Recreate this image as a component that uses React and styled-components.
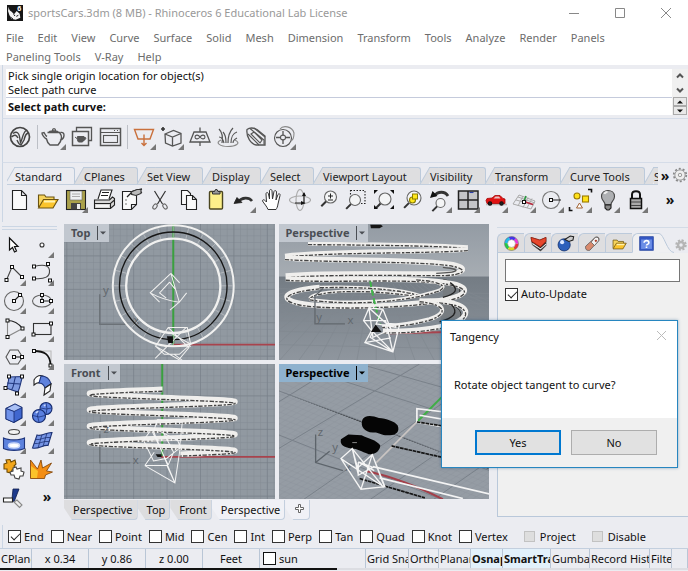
import { useState } from "react";
import styled, { createGlobalStyle, css } from "styled-components";

const GlobalStyle = createGlobalStyle`
  * {
    box-sizing: border-box;
  }
  body {
    margin: 0;
    background: #ebecf1;
  }
  body, button, input {
    font-family: "Noto Sans", "Open Sans", sans-serif;
    font-size: 11px;
    line-height: 16px;
    color: #111;
  }
  button {
    padding: 0;
    border: 0;
    background: none;
  }
`;

/* ---------- icons, all on a 28 x 28 canvas ---------- */

const Svg = ({ children, size = 28 }) => (
  <svg width={size} height={size} viewBox="0 0 28 28" fill="none" stroke="#555" strokeWidth="1.1" aria-hidden="true">
    {children}
  </svg>
);

const Handle = ({ x, y }) => (
  <rect x={x - 1.5} y={y - 1.5} width="3" height="3" fill="#fff" stroke="#111" strokeWidth="1" />
);

const Lens = ({ cx = 17, cy = 11, r = 6 }) => (
  <>
    <path d={`M${cx - r * 0.7} ${cy + r * 0.7}L${cx - r * 0.7 - 5} ${cy + r * 0.7 + 5}`} stroke="#333" strokeWidth="2" />
    <circle cx={cx} cy={cy} r={r} fill="#f4f5f6" stroke="#666" strokeWidth="1.1" />
  </>
);

const icons = {
  vray: (
    <>
      <circle cx="14" cy="14" r="9.5" stroke="#444" strokeWidth="1.7" />
      <path d="M7 10.5c4-3 6 0 6.5 3l1 6c2-3 2-9 5.500-12M5.500 14c3-3 5-2 6.500 1M22 10c-3 1-3 4-4 7l-3 5c-2 0-3-3-4-5" stroke="#444" strokeWidth="1.4" />
    </>
  ),
  teapot: (
    <path
      d="M7.5 9.500h12c3 3.5 2.5 8-1.500 12.500h-8c-2.500-2-3-3.500-3.500-6-2-1-4.500-4-4.500-6l2-.5c1 2 2 3.500 3 4M9 9.500c0-2 9-2 9.500 0M12.500 7.500c0-2.500 3-2.500 3 0M20.500 9.500c5-1 4.500 6-.5 8"
      strokeWidth="1.4"
    />
  ),
  frames: (
    <>
      <path d="M8.500 8V4.500h15v13h-3" strokeWidth="1.3" />
      <rect x="4.500" y="8.500" width="16" height="14" strokeWidth="1.5" />
      <path d="M9.500 13.500h6.500c.5 2-.5 4.500-1.500 5.500h-4c-1-1-1.500-3.500-1-5.500zM7 14l2.500 2M16 14.500c3-1 2 3-1 3" fill="#555" strokeWidth="1" />
    </>
  ),
  frameBuffer: (
    <>
      <rect x="4.500" y="5.500" width="20" height="17" strokeWidth="1.5" />
      <path d="M4.500 9.500h20M18 7.500h1M21 7.500h1" strokeWidth="1.2" />
      <rect x="7.500" y="12.500" width="14" height="7" strokeWidth="1.1" />
    </>
  ),
  areaLight: <path d="M4.500 6.500h19l-3.500 9.500H8zM14 11.500v11M11.500 20l2.500 2.500 2.500-2.500" stroke="#c9703c" strokeWidth="1.4" />,
  proxy: (
    <>
      <path d="M3 6h4M5 4v4" stroke="#333" strokeWidth="1.6" />
      <path d="M7 11l8.500-3.500 7.500 3v9.500L14.500 23 7.500 20zM7 11l7.500 3 8.500-3.500M14.500 14v9" strokeWidth="1.3" />
    </>
  ),
  infinite: (
    <>
      <path d="M8 9h12l4 10H4zM14 4.500V9M14 19v4" strokeWidth="1.3" />
      <path d="M14 14c-2-3-5-2-5 0s3 3 5 0 5-2 5 0-3 3-5 0z" strokeWidth="1.1" />
    </>
  ),
  fur: (
    <>
      <path d="M8 20C9 14 8 9 5 6M12 20c0-6-1-9-3-11M14 20c0-7 1-11 5-15M17 20c0-5 2-10 6-11M10 20c-1-4-3-6-5-6M19 20c0-3 2-4 4-5" strokeWidth="1.2" />
      <path d="M7 17c-7 3 0 6.500 7 6.500s14-3 7-6.500" stroke="#888" strokeWidth="1.2" />
    </>
  ),
  clipper: (
    <>
      <path d="M5 6.500c4-3 8-1 10 0l8 6.500v9L14 22c-5-1-10-8-9-15.500z" strokeWidth="1.3" />
      <path d="M8 5.500l14 11.500v4.500M9 11l3-2 8 8-2 3zM6 11l11 11M12 5l11 9" strokeWidth="1.1" />
    </>
  ),
  sun: (
    <>
      <circle cx="13" cy="15" r="8.500" strokeWidth="1.1" />
      <path d="M10 6c3-4 12-3 14 4 0 5-1 7-3 8" stroke="#888" />
      <circle cx="13" cy="14.500" r="2.500" />
      <path d="M13 8v5M13 16v5M6 14.500h5M15 14.500h5" strokeWidth="1.3" />
    </>
  ),
  newFile: <path d="M6.500 4.500h9l5 5v14h-14zM15.500 4.500v5h5" fill="#fafafa" stroke="#222" />,
  open: (
    <>
      <path d="M4.500 21V9h6l1.500 2h8v3" fill="#f7d45c" stroke="#6b5310" />
      <path d="M4.500 22l5-8.500h14.500l-5 8.500z" fill="#fbc42c" stroke="#6b5310" />
      <path d="M10 15.500h11" stroke="#fff3b0" strokeWidth="2" />
    </>
  ),
  save: (
    <>
      <rect x="4.500" y="4.500" width="19" height="19" fill="#aaa14b" stroke="#222" />
      <rect x="8" y="5" width="12" height="9" fill="#eef0f2" stroke="#666" strokeWidth=".6" />
      <path d="M10 8h8M10 10.500h8" stroke="#999" strokeWidth=".8" />
      <rect x="9" y="17" width="10" height="6.500" fill="#444" stroke="none" />
      <rect x="15" y="18" width="3" height="5" fill="#eee" stroke="none" />
    </>
  ),
  print: (
    <>
      <path d="M8 13l3-9h11l-3 9" fill="#fff" stroke="#222" />
      <path d="M4.500 14h15l3-3 2 1.500V19l-4 3.500h-16z" fill="#d8d8d8" stroke="#222" />
      <path d="M4.500 17.500h16l4-3.500M20.500 17v5M12 6.500h7M11 9.500h7" stroke="#222" />
      <path d="M6 20h13" stroke="#fff" strokeWidth="1.5" />
    </>
  ),
  props: (
    <>
      <path d="M4.500 5.500h14v13l-5 5h-9zM18.500 18.500h-5v5" fill="#fafafa" stroke="#222" />
      <path d="M9 11l6-6 9-2M13 8h7l4-2" stroke="#222" strokeWidth="1.3" />
      <path d="M13 6l6-2.500 4 0 0 4-5 2-4-1z" fill="#bbb" stroke="#333" />
      <path d="M7 14h2M7 18h2" stroke="#777" />
    </>
  ),
  cut: (
    <>
      <path d="M8.500 5l8 13M19.500 5l-8 13" stroke="#333" strokeWidth="1.2" />
      <ellipse cx="9" cy="20.500" rx="1.800" ry="2.800" transform="rotate(35 9 20.5)" stroke="#666" />
      <ellipse cx="19" cy="20.500" rx="1.800" ry="2.800" transform="rotate(-35 19 20.5)" stroke="#666" />
    </>
  ),
  copy: (
    <>
      <path d="M7.500 4.500h6l3 3v11h-9z" fill="#fafafa" stroke="#222" />
      <path d="M12.500 9.500h6l4 4v10h-10zM18.500 9.500v4h4" fill="#fafafa" stroke="#222" />
    </>
  ),
  paste: (
    <>
      <rect x="7.500" y="5.500" width="13" height="17.500" rx="1" fill="#fdf08a" stroke="#4b4620" strokeWidth="1.400" />
      <path d="M10.500 8V5.500h2l1-2h1.500l1 2h2V8z" fill="#999" stroke="#333" strokeWidth="1" />
    </>
  ),
  undo: (
    <>
      <path d="M8 16c4-5 11-5 14-1" stroke="#333" strokeWidth="2.6" />
      <path d="M4 17.500l3-6 5 5z" fill="#222" stroke="#222" strokeWidth=".8" />
    </>
  ),
  pan: (
    <path
      d="M10 23.500c-1-3-4-6-5.500-8.500 0-2 2-1.500 4 1L8 8c0-2 2-2 2.500 0l1 5 0-8c0-2 2.500-2 2.500 0l.5 8 1.500-7.500c.5-1.500 2.500-1 2.500.5l-.5 8 2-5.500c1-1.500 2.500-.5 2 1L20 18c-.5 3-1 4-2 5.500z"
      fill="#fff"
      stroke="#333"
      strokeWidth="1"
    />
  ),
  rotate: (
    <>
      <ellipse cx="14" cy="14" rx="10.500" ry="4" stroke="#aaa" />
      <ellipse cx="14" cy="14" rx="4" ry="10.500" stroke="#aaa" />
      <path d="M9 17h10M18 7v9" stroke="#222" />
      <path d="M15 15l4.500 2-4.500 2zM16 10l2-4 2 4z" fill="#111" stroke="none" />
    </>
  ),
  zoom: (
    <>
      <Lens cx={16.5} />
      <path d="M14 10h5M16.500 7.500v5M14 14h5" stroke="#222" strokeWidth="1" />
    </>
  ),
  zoomWindow: (
    <>
      <rect x="8.500" y="4.500" width="14.500" height="13" stroke="#222" strokeDasharray="1.5 1.5" />
      <Lens cx={13} cy={14} r={5.5} />
    </>
  ),
  zoomExtents: (
    <>
      <Lens cx={15} cy={13} />
      <path d="M4 8V4h4zM20 4h4v4zM24 19v4h-4zM4 19v4h4z" fill="#111" stroke="none" />
    </>
  ),
  zoomSelected: (
    <>
      <Lens cx={16} cy={12} r={7} />
      <circle cx="14.500" cy="14" r="3" fill="#ffe81a" stroke="#8b7d00" />
      <rect x="14.500" y="8" width="5" height="5" fill="#ffe81a" stroke="#8b7d00" strokeWidth="1" />
    </>
  ),
  undoView: (
    <>
      <path d="M8 10c4-5 11-5 14 0" stroke="#333" strokeWidth="2.800" />
      <path d="M4 12l2.500-7 5 5z" fill="#111" stroke="none" />
      <Lens cx={14.5} cy={17} r={4.5} />
    </>
  ),
  fourView: (
    <>
      <rect x="4.500" y="5" width="19.500" height="18" fill="#c4c5c8" stroke="#222" strokeWidth="1.500" />
      <path d="M14 5v18M4.500 14H24" stroke="#222" strokeWidth="1.500" />
      <path d="M15.500 6.500h4" stroke="#2b3fa8" />
    </>
  ),
  car: (
    <>
      <path d="M4 18.500h21" stroke="#bbb" strokeWidth="1.500" />
      <path d="M4 14.500l1-2 5-.5 3-2.500h5l3 3 2 .5v4.500H5z" fill="#e01212" stroke="#a50808" strokeWidth=".8" />
      <path d="M13.500 10.500h3.500l1.500 2H11.500z" fill="#e8c4c4" stroke="none" />
      <circle cx="8" cy="17.500" r="1.700" fill="#222" stroke="#111" />
      <circle cx="19.500" cy="17.500" r="1.700" fill="#222" stroke="#111" />
    </>
  ),
  cplane: (
    <>
      <path d="M3 18l18 5 4-8-16-6zM6 14l18 5M8 11l17 6M8 20l5-10M13 21.500l5-10M17 22l5-9.500" stroke="#aaa" strokeWidth="1" />
      <path d="M14 15.500l9 3" stroke="#b8273b" strokeWidth="1.600" />
      <path d="M14 15l2-5" stroke="#25963b" strokeWidth="1.600" />
      <Handle x={14} y={16} />
    </>
  ),
  circleObj: (
    <>
      <circle cx="13" cy="14" r="8.500" stroke="#777" />
      <path d="M13 14h10" stroke="#333" />
      <Handle x={13} y={14} />
    </>
  ),
  selectObj: (
    <>
      <circle cx="11" cy="10" r="3" fill="#ffe21a" stroke="#9b7a00" />
      <rect x="16.500" y="10" width="6" height="6" fill="#ffe21a" stroke="#9b7a00" />
      <path d="M13.500 17l3 5h-6z" fill="#fff" stroke="#a06030" strokeWidth="1" />
      <path d="M22 3.500h3.500v3M3.500 21v3.500h3" stroke="#111" strokeWidth="1.600" />
    </>
  ),
  bulb: (
    <>
      <path d="M11 18.500c0-3-3.500-4-3.500-8 0-8 13-8 13 0 0 4-3.500 5-3.500 8z" fill="#aeb0b3" stroke="#444" />
      <path d="M10.500 8c.5-1.500 1.500-2 3-2" stroke="#eee" strokeWidth="2" />
      <path d="M11 19h6v3l-2 2h-2l-2-2z" fill="#888" stroke="#222" />
    </>
  ),
  lock: (
    <>
      <path d="M10 12V8.500c0-4.500 8-4.500 8 0V12" stroke="#111" strokeWidth="2" />
      <rect x="8.500" y="12.500" width="11" height="10" fill="#aaa" stroke="#111" strokeWidth="1.500" />
      <path d="M9 16h10M9 19.500h10" stroke="#444" strokeWidth="1.200" />
    </>
  ),
  pointer: <path d="M9.500 7v12l3-2.500 2 4.500 2-1-2-4.500h3.500z" fill="#fff" stroke="#111" strokeWidth="1.200" />,
  point: <circle cx="14" cy="14" r="2" stroke="#333" fill="#fff" />,
  polyline: (
    <>
      <path d="M6.500 21L12 8l10 10" stroke="#444" />
      <Handle x={6.5} y={21} />
      <Handle x={12} y={8} />
      <Handle x={22} y={18} />
    </>
  ),
  ctrlCurve: (
    <>
      <path d="M6 7.500c8-2 15-2 15.500 4s-4 9-15.500 8" stroke="#444" />
      <Handle x={6} y={7.5} />
      <Handle x={20} y={5} />
      <Handle x={6} y={19.5} />
      <Handle x={22} y={21.5} />
    </>
  ),
  circle: (
    <>
      <circle cx="14" cy="14" r="9.500" stroke="#666" />
      <path d="M14 14l6-6" stroke="#222" />
      <Handle x={14} y={14} />
      <Handle x={20} y={8} />
    </>
  ),
  ellipse: (
    <>
      <ellipse cx="14" cy="14" rx="9.500" ry="6" stroke="#666" />
      <path d="M14 8v6h9" stroke="#222" />
      <Handle x={14} y={8} />
      <Handle x={14} y={14} />
      <Handle x={23} y={14} />
    </>
  ),
  arc: (
    <>
      <path d="M7.500 5.500c7 0 12 4 15 8" stroke="#222" />
      <path d="M7.500 5.500v16l15-8" stroke="#888" />
      <Handle x={7.5} y={5.5} />
      <Handle x={7.5} y={22} />
      <Handle x={22.5} y={13.5} />
    </>
  ),
  rect: (
    <>
      <rect x="5.500" y="8.500" width="17.500" height="11" stroke="#333" />
      <Handle x={23} y={8.5} />
      <Handle x={5.5} y={19.5} />
    </>
  ),
  polygon: (
    <>
      <path d="M10 7h8l4.500 7-4.500 7h-8l-4-7z" stroke="#555" />
      <path d="M14 14h8" stroke="#222" />
      <Handle x={14} y={14} />
      <Handle x={22} y={14} />
    </>
  ),
  fillet: (
    <>
      <path d="M8 8h15v14" stroke="#bbb" />
      <path d="M6 8c10 0 16 3 16.500 14" stroke="#111" strokeWidth="1.800" />
      <Handle x={6} y={8} />
      <Handle x={22.5} y={22.5} />
    </>
  ),
  surface: (
    <>
      <path d="M9 6l13.500-.5c-2 6-2 10-4.500 15.500L6 17c3-4 2-7 3-11z" fill="#7f9be0" stroke="#20367c" />
      <path d="M7 12l13 1M15.500 6c-2 5-1 9-4 13" stroke="#20367c" />
      <Handle x={9} y={5.5} />
      <Handle x={22} y={5.5} />
      <Handle x={5.5} y={17} />
      <Handle x={17} y={22.5} />
    </>
  ),
  sweep: (
    <>
      <path d="M6 9c3-5 6-5 9-4l-2 7c-3-1-5 0-7 2z" fill="#fff" stroke="#222" />
      <path d="M13 5c6 0 9 4 10 8l-6 4c-1-3-3-5-6-5z" fill="#5f82dd" stroke="#20367c" />
      <path d="M17 17l6-4-1 7-6 4z" fill="#fff" stroke="#222" />
    </>
  ),
  box: (
    <>
      <path d="M6 9.500L15 5l7 3.500v10.500l-8 4.500-8-3.500z" fill="#4067cf" stroke="#142a6e" />
      <path d="M6 9.500L15 5l7 3.500-8 4z" fill="#a9c0f5" stroke="#142a6e" strokeWidth=".8" />
      <path d="M6 9.500l8 3v11l-8-3.500z" fill="#6f92ea" stroke="#142a6e" strokeWidth=".8" />
    </>
  ),
  spheres: (
    <>
      <circle cx="18" cy="9.500" r="6" fill="#5f84e2" stroke="#142a6e" />
      <circle cx="11" cy="17" r="6.500" fill="#5a80e0" stroke="#142a6e" />
      <path d="M5 16.500q6 3 12 0M11 11q-3 6 0 12M12.500 9q6 2 11 0M18 4q2 6 0 11" stroke="#142a6e" strokeWidth=".7" />
      <path d="M8 14q1-1.500 2.500-1.500M16 7q1-1 1.500-1" stroke="#cddafa" strokeWidth="1.600" />
    </>
  ),
  solidTools: (
    <>
      <ellipse cx="14" cy="5" rx="5.500" ry="2.500" fill="#f4f4f4" stroke="#444" />
      <path d="M3.500 11c5 2.500 16 2.500 21 0v10.500c-5 2.500-16 2.500-21 0z" fill="#5d82dd" stroke="#20367c" />
      <ellipse cx="14" cy="18.500" rx="5.500" ry="2.500" fill="#fff" stroke="#cddafa" strokeWidth="1.500" />
    </>
  ),
  mesh: (
    <>
      <path d="M9 8c5 2 9-3 15-2.500l-4 13c-5-1-9 4-15.500 2.500z" fill="#7594e4" stroke="#1d3275" />
      <path d="M14 7.500L10 21M19 6l-4 13.500M7.500 12.500c5 1 9-3 15-2M6 16.500c5 1 9-3 15-2" stroke="#1d3275" strokeWidth=".8" />
    </>
  ),
  puzzle: (
    <>
      <path d="M4 9l3-1-1-3 4-.5 1 2.500 4-2 1 4-2 2 2 3-4 1-1 3-4-1 0-3-3 0z" fill="#f2a71b" stroke="#6f4b04" />
      <path d="M13 13l3-1 1 2 4-1 0 3 3 1-1 4-3 0-1 3-4-1-1-3-3 0-1-3 3-1z" fill="#fff" stroke="#444" />
    </>
  ),
  explode: (
    <>
      <path d="M2.500 5l7 9 3.500-9 1.500 8 9-5-5 8 6 1-7 3-1 3.500H2.500z" fill="#f38d13" stroke="#7c3e00" strokeWidth=".8" />
      <path d="M3 23V11l7 5-1 7z" fill="#fbc32b" stroke="none" />
    </>
  ),
  trim: (
    <>
      <path d="M13 6h6l-5 13-2-3z" fill="#1d3a8c" stroke="#0d1c4d" strokeWidth=".8" />
      <path d="M3.500 15h9v4h-9z" fill="#fff" stroke="#222" />
      <path d="M14 19l3-2 5 5-2.500 2.500z" fill="#eee" stroke="#888" />
    </>
  ),
  help: (
    <>
      <rect x="4" y="4" width="20" height="20" fill="#3558c4" stroke="#24439f" />
      <path d="M6 8h16v14H6z" fill="#6c8ee6" stroke="none" />
      <path d="M10.500 13c0-4.500 7-4 7 0 0 2.500-3.500 2-3.500 4M14 18.500v2" stroke="#fff" strokeWidth="2.400" />
    </>
  ),
  layers: (
    <>
      <path d="M3 5l13 4 9-4v12l-8 8L5 16z" fill="#222" stroke="#444" />
      <path d="M3 5l13 4 9-4v6l-8 8L4 11z" fill="#e6482d" stroke="#a3200d" />
      <path d="M5 14l12 8 8-7" stroke="#eee" strokeWidth="1.500" />
    </>
  ),
  render: (
    <>
      <circle cx="12" cy="16" r="9" fill="#2b5fbb" stroke="#0d2b66" />
      <circle cx="9" cy="12" r="3" fill="#dbe8ff" stroke="none" />
      <path d="M13 8l8-5 5 1-1 5-6 2z" fill="#ccc" stroke="#222" strokeWidth="1.600" />
    </>
  ),
  material: (
    <>
      <path d="M4 18L18 5c4-2 7 1 5 5L10 24c-5 1-7-2-6-6z" fill="#d98a6d" stroke="#555" />
      <path d="M12 12l5 5 6-7c1-4-1-6-5-5z" fill="#f4f4f4" stroke="#555" />
      <path d="M18 9l2 2" stroke="#a5341e" strokeWidth="3" />
    </>
  ),
  gear: (
    <>
      <circle cx="14" cy="14" r="11" stroke="#888" strokeWidth="3" strokeDasharray="3.5 3.410" />
      <circle cx="14" cy="14" r="9" fill="#eee" stroke="#888" strokeWidth="1.400" />
      <circle cx="14" cy="14" r="3" stroke="#888" strokeWidth="1.400" />
    </>
  ),
  gearFlat: (
    <>
      <circle cx="14" cy="14" r="9" stroke="#b5b5b5" strokeWidth="5" strokeDasharray="4 3.070" />
      <circle cx="14" cy="14" r="6" stroke="#b5b5b5" strokeWidth="5" />
    </>
  ),
  colors: (
    <>
      {["#e33", "#e3d", "#43e", "#2be", "#2c4", "#dd2"].map((c, i) => (
        <circle key={c} cx="14" cy="14" r="8" stroke={c} strokeWidth="4.500" strokeDasharray="8.4 41.860" strokeDashoffset={i * 8.377} />
      ))}
      <circle cx="14" cy="14" r="10.300" stroke="#666" strokeWidth=".8" />
      <circle cx="14" cy="14" r="5.700" fill="#fff" stroke="#777" strokeWidth=".6" />
    </>
  ),
};

/* ---------- title, menu, command line ---------- */

const Window = styled.div`
  display: flex;
  flex-direction: column;
  min-width: 0;
  background: #ebecf1;
`;

const TitleBar = styled.header`
  display: flex;
  align-items: center;
  height: 28px;
  padding: 0 12px 3px 7px;
  gap: 5px;
  background: #fff;
  white-space: nowrap;
  h1 {
    margin: 0;
    flex: 1;
    font-size: 11px;
    font-weight: 400;
    color: #999;
  }
`;

const WindowButtons = styled.div`
  display: flex;
  gap: 26px;
  button {
    display: flex;
    width: 20px;
    height: 20px;
    align-items: center;
    justify-content: center;
  }
`;

const MenuBar = styled.nav`
  display: flex;
  flex-wrap: wrap;
  gap: 3px 14px;
  padding: 2px 6px 0;
  background: #fff;
  button {
    color: #6c6c6c;
  }
`;

const CommandArea = styled.section`
  display: flex;
  margin-left: 2px;
  padding: 4px 0 3px 3px;
  border-left: 1px solid #cbd6e4;
  border-bottom: 1px solid #d5dce8;
`;

const CommandText = styled.div`
  flex: 1;
  min-width: 0;
  background: #fff;
  p {
    margin: 0;
    padding-left: 2px;
    line-height: 14px;
  }
  div {
    display: flex;
    align-items: center;
    border-top: 1px solid #c5cbdc;
    padding-left: 2px;
    height: 18px;
  }
  label {
    font-weight: 700;
    white-space: nowrap;
  }
  input {
    flex: 1;
    min-width: 0;
    height: 16px;
    border: 0;
    outline: 0;
    background: none;
  }
`;

const CommandScroll = styled.div`
  width: 16px;
  display: grid;
  grid-template-rows: 14px 14px 9px 9px;
  background: #f0f0f0;
  button {
    display: flex;
    align-items: center;
    justify-content: center;
  }
  button:nth-child(n + 3) {
    margin: 0 1px;
    border: 1px solid #aaa;
    background: #e9e9e9;
  }
`;

/* ---------- toolbars ---------- */

const ToolButton = styled.button`
  position: relative;
  display: flex;
  width: 28px;
  height: 28px;
  flex: none;
  ${(p) =>
    p.$flyout &&
    css`
      &::after {
        content: "";
        position: absolute;
        right: 2px;
        bottom: 1px;
        border: 3px solid transparent;
        border-right-color: #777;
        border-bottom-color: #777;
      }
    `}
`;

const ToolRow = styled.div`
  display: flex;
  align-items: center;
  margin-left: 2px;
  padding-left: 3px;
  border-left: 1px solid #cbd6e4;
  overflow: hidden;
`;

const VrayRow = styled(ToolRow)`
  height: 43px;
  padding-bottom: 7px;
`;

const Divider = styled.span`
  width: 6px;
  height: 24px;
  border-left: 1px solid #bcbfc6;
  margin-left: 3px;
  margin-right: -3px;
`;

const StandardRow = styled(ToolRow)`
  height: 37px;
  padding-bottom: 7px;
`;

const More = styled.button`
  margin-left: ${(p) => p.$gap || 0}px;
  width: ${(p) => p.$w || 18}px;
  flex: none;
  font-size: 14px;
  font-weight: 700;
  line-height: 14px;
`;

const TabStrip = styled.div`
  display: flex;
  height: 23px;
  padding: 4px 0 0 12px;
  margin-left: 2px;
  border-top: 1px solid #d5dce8;
  border-left: 1px solid #cbd6e4;
`;

const ToolTabs = styled.div`
  display: flex;
  flex: 1;
  min-width: 0;
  overflow: hidden;
  margin-left: -8px;
  padding-left: 8px;
  border-bottom: 1px solid #c3cfde;
`;

const ToolTab = styled.button`
  position: relative;
  flex: none;
  height: 18px;
  margin-right: 9px;
  padding: 0;
  border-top: 1px solid #bccadb;
  border-right: 1px solid #bccadb;
  border-radius: 0 3px 0 0;
  background: ${(p) => (p.$active ? "#ebecf1" : "#dedee0")};
  width: ${(p) => p.$w}px;
  color: #222;
  white-space: nowrap;
  text-align: left;
  &::before {
    content: "";
    position: absolute;
    left: -6px;
    top: -1px;
    width: 8px;
    height: 18px;
    border-top: 1px solid #bccadb;
    border-left: 1px solid #bccadb;
    background: inherit;
    transform: skewX(-30deg);
  }
  span {
    position: relative;
  }
`;

/* ---------- work area ---------- */

const WorkArea = styled.main`
  position: relative;
  display: flex;
  padding-top: 2px;
`;

const SideTools = styled.aside`
  width: 64px;
  flex: none;
  padding-top: 2px;
`;

const SideGrip = styled.div`
  height: 4px;
  width: 55px;
  margin: 0 0 1px 2px;
  border-top: 1px solid #cbd6e4;
  border-bottom: 1px solid #cbd6e4;
`;

const SideGrid = styled.div`
  display: grid;
  grid-template-columns: 28px 28px;
`;

const Center = styled.div`
  flex: 1;
  min-width: 0;
`;

const ViewGrid = styled.div`
  display: grid;
  grid-template-columns: 1fr 1fr;
  grid-template-rows: 136px 135px;
  gap: 4px;
`;

const View = styled.section`
  position: relative;
  min-width: 0;
  overflow: hidden;
  background: #9199a1;
  > svg {
    display: block;
    width: 100%;
    height: 100%;
  }
`;

const ViewLabel = styled.button`
  position: absolute;
  left: 0;
  top: 0;
  display: flex;
  align-items: center;
  gap: 7px;
  height: 18px;
  padding: 0 2px 0 7px;
  background: ${(p) => (p.$active ? "#8fb2ce" : "#c1c7cf")};
  color: ${(p) => (p.$active ? "#000" : "#4a4e54")};
  font-weight: 700;
  span {
    display: flex;
    align-items: center;
    height: 14px;
    border-left: 1px solid currentColor;
    padding-left: 1px;
  }
`;

const ViewTabs = styled.div`
  display: flex;
  height: 25px;
  margin-top: 1px;
`;

const ViewTab = styled.button`
  height: 20px;
  padding: 0 4px 0 9px;
  border: 1px solid #c3cfde;
  border-width: 0 1px 1px 0;
  border-radius: 0 0 4px 4px;
  background: ${(p) => (p.$active ? "#f0f1f6" : "#dddddf")};
  clip-path: polygon(0 0, 100% 0, 100% 100%, 8px 100%, 0 8px);
`;

const SidePanel = styled.aside`
  width: 191px;
  flex: none;
  margin: 3px 0 8px 8px;
  border-top: 1px solid #d3dbe6;
  display: flex;
  flex-direction: column;
`;

const PanelTabs = styled.div`
  display: flex;
  align-items: flex-end;
  height: 25px;
  > :last-child {
    margin-left: auto;
    margin-bottom: 1px;
  }
`;

const PanelTab = styled.button`
  display: flex;
  align-items: center;
  justify-content: center;
  width: 27px;
  height: 20px;
  border: 1px solid #bccadb;
  border-width: 1px 0 1px 1px;
  border-radius: 6px 0 0 0;
  background: #dedee0;
  ${(p) =>
    p.$active &&
    css`
      background: #f0f0f2;
      border-bottom-color: #f0f0f2;
    `}
`;

const TabTail = styled.svg`
  width: 15px;
  height: 20px;
`;

const PanelBody = styled.div`
  flex: 1;
  padding: 6px 8px 0 7px;
  background: #f0f0f0;
  border-left: 1px solid #b9c8da;
  border-bottom: 1px solid #b9c8da;
`;

const SearchInput = styled.input`
  display: block;
  width: 100%;
  height: 23px;
  margin-bottom: 4px;
  padding: 0 4px;
  border: 1px solid #767676;
  background: #fff;
`;

const CheckLabel = styled.label`
  display: inline-flex;
  align-items: center;
  gap: 3px;
  white-space: nowrap;
`;

const CheckInput = styled.input`
  appearance: none;
  position: relative;
  width: 13px;
  height: 13px;
  margin: 0;
  flex: none;
  border: 1px solid #333;
  background: #fff;
  &:checked::after {
    content: "";
    position: absolute;
    left: 4px;
    top: 0;
    width: 4px;
    height: 8px;
    border: 1px solid #222;
    border-width: 0 1px 1px 0;
    transform: rotate(45deg);
  }
  &:disabled {
    width: 11px;
    height: 11px;
    margin-right: 2px;
    border-color: #c2c2c2;
    background: #dedede;
  }
`;

/* ---------- dialog ---------- */

const Dialog = styled.section`
  position: absolute;
  z-index: 2;
  right: 10px;
  top: 98px;
  width: 237px;
  border: 1px solid #2786c0;
  background: #fff;
  box-shadow: 0 0 3px rgba(0, 70, 120, 0.4);
`;

const DialogHead = styled.div`
  display: flex;
  align-items: center;
  justify-content: space-between;
  height: 31px;
  padding: 1px 10px 0 8px;
  h2 {
    margin: 0;
    font-size: 11px;
    font-weight: 400;
  }
`;

const DialogText = styled.p`
  margin: 0;
  padding: 25px 12px 25px 12px;
`;

const DialogFoot = styled.div`
  display: flex;
  justify-content: flex-end;
  gap: 10px;
  padding: 12px 20px 12px;
  background: #f0f0f0;
`;

const DialogButton = styled.button`
  width: 86px;
  height: 25px;
  border: ${(p) => (p.$primary ? "2px solid #0078d0" : "1px solid #adadad")};
  background: #e1e1e1;
`;

/* ---------- bottom bars ---------- */

const SnapBar = styled.div`
  display: flex;
  align-items: center;
  gap: ${(p) => p.$gap}px;
  height: 23px;
  margin-left: 2px;
  padding-left: 5px;
  border-left: 1px solid #cbd6e4;
  overflow: hidden;
`;

const SnapGroup = styled.div`
  display: flex;
  gap: ${(p) => p.$gap}px;
`;

const StatusBar = styled.footer`
  display: flex;
  height: 20px;
  border-top: 1px solid #c3cfde;
`;

const StatusCell = styled.button`
  flex: ${(p) => (p.$grow ? 1 : "none")};
  width: ${(p) => p.$w}px;
  min-width: 0;
  display: flex;
  align-items: center;
  justify-content: ${(p) => (p.$center ? "center" : "flex-start")};
  gap: 3px;
  padding-left: ${(p) => (p.$center ? 0 : 1)}px;
  border-right: 1px solid #b9c6d6;
  overflow: hidden;
  white-space: nowrap;
  font-weight: ${(p) => (p.$on ? 700 : 400)};
  background: ${(p) => (p.$on ? "#e2f1fb" : "transparent")};
`;

const Swatch = styled.i`
  width: 13px;
  height: 13px;
  margin-left: 2px;
  border: 1px solid #111;
  background: #fff;
`;

const BottomEdge = styled.div`
  height: 2px;
  background: linear-gradient(to right, #111 49%, #dcdde2 49%);
`;

/* ---------- viewport drawings ---------- */

const Grid = ({ id, step = 20 }) => (
  <>
    <defs>
      <pattern id={id} width={step} height={step} patternUnits="userSpaceOnUse" x="7" y="4">
        <path d={`M0 0H${step}M0 0V${step}`} stroke="#828a93" strokeWidth="3" />
      </pattern>
      <pattern id={`${id}major`} width={step * 5} height={step * 5} patternUnits="userSpaceOnUse" x="7" y="4">
        <path d={`M0 0H${step * 5}M0 0V${step * 5}`} stroke="#737b84" strokeWidth="3" />
      </pattern>
    </defs>
    <rect width="1300" height="900" fill={`url(#${id})`} />
    <rect width="1300" height="900" fill={`url(#${id}major)`} />
  </>
);

const Axis = ({ children }) => (
  <g fill="#62686e" fontSize="34" fontFamily="Noto Sans, sans-serif">
    {children}
  </g>
);

const Band = ({ d, w = 16 }) => (
  <g fill="none">
    <path d={d} stroke="#f0efed" strokeWidth={w} strokeLinejoin="round" />
    <path d={d} stroke="#444" strokeWidth="4" strokeDasharray="13 4 7 5" transform={`translate(0 ${w / 2 - 3})`} />
  </g>
);

const TopScene = () => {
  const spokes = Array.from({ length: 24 }, (_, i) => (i * Math.PI) / 12);
  return (
    <svg viewBox="0 10 630 410" preserveAspectRatio="xMinYMin slice">
      <Grid id="topgrid" />
      <path d="M327 10V372" stroke="#3aa03f" strokeWidth="6" />
      <path d="M327 371H1300" stroke="#a8434d" strokeWidth="5" />
      <path d="M107 220V310H190" stroke="#6b7177" strokeWidth="4" fill="none" />
      <Axis>
        <text x="117" y="219">y</text>
        <text x="208" y="309">x</text>
      </Axis>
      <g fill="none">
        {spokes.map((a) => (
          <path
            key={a}
            d={`M${327 + 145 * Math.cos(a)} ${195 + 145 * Math.sin(a)}L${327 + 178 * Math.cos(a)} ${195 + 178 * Math.sin(a)}`}
            stroke="#c3c6c9"
            strokeWidth="2"
          />
        ))}
        <circle cx="327" cy="195" r="181" stroke="#f1f1f0" strokeWidth="6" />
        <circle cx="327" cy="195" r="161" stroke="#161616" strokeWidth="4" />
        <circle cx="327" cy="195" r="141" stroke="#f1f1f0" strokeWidth="7" />
        <g stroke="#f1f1f0" strokeWidth="3">
          <path d="M320 158L258 216 286 244M320 158l26 28M320 158l25 86M258 216q40 22 87 28M345 244l22-28M345 244l-28 24M316 184l-30 32 20 16M316 184l16 20" />
          <path d="M312 320l-38 56 26 24h45l34-30-10-50zM312 320l62 60-32 38M365 320l-92 92M300 376h80M318 336l62 34M274 376l70 40M330 400l24 18" />
        </g>
        <path d="M308 346h18v20h-14z" fill="#111" />
      </g>
    </svg>
  );
};

const FrontScene = () => {
  // one turn is 49 units high, seen edge on
  let d = "M295 86";
  for (let t = 0; t <= 3.98; t += 0.02) {
    d += `L${(294 - 218 * Math.sin(t * 2 * Math.PI)).toFixed(1)} ${(86 + t * 49).toFixed(1)}`;
  }
  return (
    <svg viewBox="0 10 630 410" preserveAspectRatio="xMinYMin slice">
      <Grid id="frontgrid" />
      <path d="M294 10V285" stroke="#3aa03f" strokeWidth="6" />
      <path d="M290 288H1300" stroke="#a8434d" strokeWidth="5" />
      <path d="M107 220V306H198" stroke="#6b7177" strokeWidth="4" fill="none" />
      <Band d={d} w={17} />
      <Axis>
        <text x="118" y="217">z</text>
        <text x="206" y="308">x</text>
      </Axis>
      <g fill="none" stroke="#f4f4f4" strokeWidth="3">
        <path d="M260 208l-22 30 30 62 40-8 40-32-8-22-60-30zM242 314l90 52 16-106M242 314l28-40M242 314h66l24 52M280 176l-12 36 64 154M280 176l74 8-8 76M262 208l50 104M300 220l28 54-16 38M238 238h110" />
      </g>
      <path d="M274 280h18v8h-12z" fill="#111" />
    </svg>
  );
};

const fan = Array.from({ length: 27 }, (_, i) => i * 60 - 480);

const PerspectiveScene = () => (
  <svg viewBox="8 10 632 410" preserveAspectRatio="xMinYMin slice">
    <defs>
      <linearGradient id="sky" x1="0" y1="0" x2="0" y2="1">
        <stop offset="0" stopColor="#929aa3" />
        <stop offset="1" stopColor="#a7adb3" />
      </linearGradient>
      <linearGradient id="ground" x1="0" y1="0" x2="0" y2="1">
        <stop offset="0" stopColor="#747c84" />
        <stop offset="0.4" stopColor="#9299a1" />
      </linearGradient>
    </defs>
    <rect x="0" y="0" width="1300" height="168" fill="url(#sky)" />
    <rect x="0" y="168" width="1300" height="700" fill="url(#ground)" />
    <g stroke="#808890" strokeWidth="2">
      {fan.map((x) => (
        <path key={x} d={`M${300 + (x - 300) * 0.28} 190L${x} 430`} />
      ))}
      {[212, 226, 242, 260, 282, 308, 340, 380].map((y) => (
        <path key={y} d={`M0 ${y - 8}L1300 ${y + 22}`} />
      ))}
    </g>
    <path d="M282 12h32l6 5-10 6h-26z" fill="#151515" />
    <path d="M500 176C545 186 560 206 545 226L500 240M500 246c50 8 70 34 40 62l-50 10" fill="#777c80" stroke="#333" strokeWidth="3" />
    <path d="M340 338L640 332" stroke="#a8434d" strokeWidth="6" />
    <Band d="M95 69C250 70 480 72 575 80" w={12} />
    <Band d="M575 86C420 96 160 90 26 106" w={14} />
    <Band d="M26 112C200 122 440 116 530 132C590 146 550 162 480 160C340 160 160 156 28 166" />
    <Band d="M28 174C180 184 440 164 540 192C590 208 560 230 490 240C340 262 120 262 60 246C0 230 40 208 130 200" />
    <Band d="M130 200C260 196 380 206 435 226M100 234C110 212 240 200 420 226" w={9} />
    <Band d="M420 176C500 180 520 200 480 212M100 236C190 250 360 250 480 212" w={10} />
    <Band d="M430 242C540 236 590 262 560 292C530 320 420 334 320 332" />
    <Band d="M430 240C520 250 510 280 460 296C400 312 350 316 318 318" w={12} />
    <path d="M500 140C560 146 550 156 480 158" stroke="#555" strokeWidth="4" fill="none" />
    <path d="M522 186C550 206 540 220 500 230M526 252C550 278 530 292 490 304" stroke="#222" strokeWidth="4" fill="none" />
    <path d="M282 182C288 220 300 270 312 310" stroke="#3fb548" strokeWidth="6" strokeDasharray="18 8" fill="none" />
    <path d="M116 224V310H206M116 226L140 204" stroke="#62686e" strokeWidth="4" fill="none" />
    <Axis>
      <text x="120" y="300">y</text>
      <text x="214" y="310">x</text>
    </Axis>
    <g fill="none" stroke="#f4f4f4" strokeWidth="4">
      <path d="M278 262L262 300l24 30-20 36 84 28 20-82-40-4zM286 330l64 64M278 262l42 4 24 60-54 24zM262 300h66l22 94M266 366l78-14M318 268l-36 82 68 44M300 310l60 10" />
    </g>
    <path d="M298 312l18 22h-32z" fill="#111" />
  </svg>
);

const CarsScene = () => (
  <svg viewBox="8 10 632 410" preserveAspectRatio="xMinYMin slice">
    <rect width="1300" height="900" fill="#959ca4" />
    <g stroke="#8b939b" strokeWidth="1">
      {Array.from({ length: 60 }, (_, i) => (
        <path key={i} d={`M${i * 26 - 500} 430L${i * 26 + 180} 0M0 ${i * 18 - 300}L700 ${i * 18 - 20}`} />
      ))}
    </g>
    <g stroke="#79818a" strokeWidth="3">
      <path d="M0 128L190 10M0 268L430 10M80 418L640 30M280 418L640 170M0 88L250 180 640 330M40 10L640 200M0 220L500 418M250 10L640 120M470 418L640 300" />
    </g>
    <path d="M422 184L510 96" stroke="#3fae46" strokeWidth="6" />
    <path d="M422 184L300 306" stroke="#c9c4c2" strokeWidth="5" />
    <path d="M272 332C340 346 420 376 500 416" stroke="#a33f49" strokeWidth="6" fill="none" />
    <g fill="none" stroke="#f4f4f4" strokeWidth="5">
      <path d="M640 170L422 144v40l218 40M430 164l210 36M290 318L640 400M310 352L560 414" />
    </g>
    <path d="M422 184L640 218M346 256L640 322M250 354L446 412" stroke="#151515" strokeWidth="5" strokeDasharray="11 2" />
    <path d="M258 178c6-16 30-14 50-6 22 2 48 10 56 22 8 18-4 32-28 30-18 2-28-10-46-8-26-2-38-18-32-38z" fill="#050505" />
    <path d="M194 236l22-14 40 2c20 10 44 14 56 30 0 18-18 30-36 26-20-6-32-16-50-16-24-4-36-12-32-28z" fill="#050505" />
    <path d="M228 246h14" stroke="#888" strokeWidth="3" />
    <path d="M118 222V306L200 330M118 306l42-34" stroke="#5d646b" strokeWidth="4" fill="none" />
    <Axis>
      <text x="124" y="226">z</text>
      <text x="168" y="270">y</text>
      <text x="206" y="332">x</text>
    </Axis>
    <g fill="none" stroke="#f4f4f4" strokeWidth="4">
      <path d="M228 264L194 294l60 92 72-8-38-96-44 40zM228 264l94 116M194 294l130 86M288 282l36 96M246 304v40l44-24-44-16 48 26M254 386l34-104M228 264l18 78" />
    </g>
  </svg>
);

/* ---------- data ---------- */

const menus = [
  "File", "Edit", "View", "Curve", "Surface", "Solid", "Mesh", "Dimension", "Transform",
  "Tools", "Analyze", "Render", "Panels", "Paneling Tools", "V-Ray", "Help",
];

const vrayTools = [
  ["vray"],
  null,
  ["teapot", 1], ["frames"], ["frameBuffer"],
  null,
  ["areaLight", 1], ["proxy", 1], ["infinite"], ["fur"], ["clipper"], ["sun", 1],
];

const standardTools = [
  ["newFile"], ["open"], ["save", 1], ["print"], ["props"], ["cut"], ["copy"], ["paste"],
  ["undo", 1], ["pan"], ["rotate"], ["zoom"], ["zoomWindow"], ["zoomExtents"], ["zoomSelected"],
  ["undoView", 1], ["fourView", 1], ["car", 1], ["cplane", 1], ["circleObj", 1], ["selectObj", 1],
  ["bulb", 1], ["lock", 1],
];

const sideTools = [
  ["pointer"], ["point", 1], ["polyline", 1], ["ctrlCurve", 1], ["circle", 1], ["ellipse", 1],
  ["arc", 1], ["rect", 1], ["polygon", 1], ["fillet", 1], ["surface", 1], ["sweep", 1],
  ["box", 1], ["spheres", 1], ["solidTools", 1], ["mesh", 1], ["puzzle"], ["explode"], ["trim"],
];

const toolTabs = [
  ["Standard", 60], ["CPlanes", 54], ["Set View", 56], ["Display", 49], ["Select", 44],
  ["Viewport Layout", 98], ["Visibility", 56], ["Transform", 66], ["Curve Tools", 75], ["Surface Tools", 80],
];

const viewports = [
  ["Top", TopScene], ["Perspective", PerspectiveScene], ["Front", FrontScene], ["Perspective", CarsScene],
];

const snaps = ["End", "Near", "Point", "Mid", "Cen", "Int", "Perp", "Tan", "Quad", "Knot", "Vertex"];

const toggles = [
  ["Grid Snap", 43], ["Ortho", 30], ["Planar", 32], ["Osnap", 32, true], ["SmartTrack", 48, true],
  ["Gumball", 39], ["Record History", 60], ["Filter", 22],
];

const Tool = ({ tool: [name, flyout] }) => (
  <ToolButton type="button" aria-label={name} $flyout={flyout}>
    <Svg>{icons[name]}</Svg>
  </ToolButton>
);

const Arrow = ({ up, solid }) => (
  <svg width="8" height="6" viewBox="0 0 8 6" aria-hidden="true">
    <path
      d={up ? "M1 4.500L4 1.500l3 3" : "M1 1.500l3 3 3-3"}
      fill={solid ? "currentColor" : "none"}
      stroke={solid ? "none" : "#555"}
      strokeWidth="2"
    />
  </svg>
);

const App = () => {
  const [asking, setAsking] = useState(true);
  const [tab, setTab] = useState(0);
  const [view, setView] = useState(3);

  return (
    <Window>
      <GlobalStyle />
      <TitleBar>
        <svg width="16" height="16" viewBox="0 0 48 48" aria-hidden="true">
          <rect width="48" height="48" fill="#161616" />
          <path d="M5 5c1 9 4 13 9 15l7 8 8-10 9 8 2 12-14 6-13-3-6-11-4-12z" fill="#f3f3f3" />
          <path d="M10 36l8 6M20 28l4 5M28 34l6-3" stroke="#161616" strokeWidth="3" />
          <text x="31" y="19" fill="#fff" fontSize="21" fontWeight="700" fontFamily="Noto Sans, sans-serif">6</text>
        </svg>
        <h1>sportsCars.3dm (8 MB) - Rhinoceros 6 Educational Lab License</h1>
        <WindowButtons>
          <button type="button" aria-label="Minimize">
            <svg width="12" height="12"><path d="M1 6.500h10" stroke="#888" /></svg>
          </button>
          <button type="button" aria-label="Maximize">
            <svg width="12" height="12"><path d="M1.500 1.500h9v9h-9z" fill="none" stroke="#888" /></svg>
          </button>
          <button type="button" aria-label="Close">
            <svg width="12" height="12"><path d="M1 1l10 10M11 1L1 11" stroke="#888" /></svg>
          </button>
        </WindowButtons>
      </TitleBar>

      <MenuBar>
        {menus.map((m) => (
          <button type="button" key={m}>{m}</button>
        ))}
      </MenuBar>

      <CommandArea>
        <CommandText>
          <p>Pick single origin location for object(s)</p>
          <p>Select path curve</p>
          <div>
            <label htmlFor="command">Select path curve:</label>
            <input id="command" />
          </div>
        </CommandText>
        <CommandScroll>
          <button type="button" aria-label="Scroll up"><Arrow up /></button>
          <button type="button" aria-label="Scroll down"><Arrow /></button>
          <button type="button" aria-label="Previous"><Arrow up solid /></button>
          <button type="button" aria-label="Next"><Arrow solid /></button>
        </CommandScroll>
      </CommandArea>

      <VrayRow>
        {vrayTools.map((t, i) => (t ? <Tool key={t[0]} tool={t} /> : <Divider key={i} />))}
      </VrayRow>

      <TabStrip>
        <ToolTabs>
          {toolTabs.map(([name, w], i) => (
            <ToolTab type="button" key={name} $w={w} $active={i === tab} onClick={() => setTab(i)}>
              <span>{name}</span>
            </ToolTab>
          ))}
        </ToolTabs>
        <More type="button" aria-label="More tabs" $w={14}>»</More>
        <Svg size={16}>{icons.gear}</Svg>
      </TabStrip>
      <StandardRow>
        {standardTools.map((t) => (
          <Tool key={t[0]} tool={t} />
        ))}
        <More type="button" aria-label="More tools" $gap={11}>»</More>
      </StandardRow>

      <WorkArea>
        <SideTools>
          <SideGrip />
          <SideGrid>
            {sideTools.map((t) => (
              <Tool key={t[0]} tool={t} />
            ))}
            <More type="button" aria-label="More tools" $gap={10}>»</More>
          </SideGrid>
        </SideTools>

        <Center>
          <ViewGrid>
            {viewports.map(([name, Scene], i) => (
              <View key={i}>
                <Scene />
                <ViewLabel type="button" $active={i === view} onClick={() => setView(i)}>
                  {name}
                  <span><Arrow solid /></span>
                </ViewLabel>
              </View>
            ))}
          </ViewGrid>
          <ViewTabs>
            <ViewTab type="button">Perspective</ViewTab>
            <ViewTab type="button">Top</ViewTab>
            <ViewTab type="button">Front</ViewTab>
            <ViewTab type="button" $active>Perspective</ViewTab>
            <ViewTab type="button" $active aria-label="New viewport">
              <svg width="11" height="11" viewBox="0 0 11 11">
                <path d="M4.500 1.500h2v3h3v2h-3v3h-2v-3h-3v-2h3z" fill="#fff" stroke="#666" />
              </svg>
            </ViewTab>
          </ViewTabs>
        </Center>

        <SidePanel>
          <PanelTabs>
            {["colors", "layers", "render", "material", "open", "help"].map((name) => (
              <PanelTab type="button" key={name} aria-label={name} $active={name === "help"}>
                <Svg size={19}>{icons[name]}</Svg>
              </PanelTab>
            ))}
            <TabTail viewBox="0 0 15 20">
              <path d="M0 .5C5 .5 8 19.500 15 19.500H0z" fill="#f0f0f2" />
              <path d="M0 .5C5 .5 8 19.500 15 19.500" fill="none" stroke="#bccadb" />
            </TabTail>
            <Svg size={14}>{icons.gearFlat}</Svg>
          </PanelTabs>
          <PanelBody>
            <SearchInput type="text" aria-label="Search" />
            <CheckLabel>
              <CheckInput type="checkbox" defaultChecked />
              Auto-Update
            </CheckLabel>
          </PanelBody>
        </SidePanel>

        {asking && (
          <Dialog role="dialog" aria-labelledby="ask-title">
            <DialogHead>
              <h2 id="ask-title">Tangency</h2>
              <button type="button" aria-label="Close" onClick={() => setAsking(false)}>
                <svg width="11" height="11"><path d="M1 1l9 9M10 1L1 10" stroke="#bbb" /></svg>
              </button>
            </DialogHead>
            <DialogText>Rotate object tangent to curve?</DialogText>
            <DialogFoot>
              <DialogButton type="button" $primary onClick={() => setAsking(false)}>Yes</DialogButton>
              <DialogButton type="button" onClick={() => setAsking(false)}>No</DialogButton>
            </DialogFoot>
          </Dialog>
        )}
      </WorkArea>

      <SnapBar $gap={16}>
        <SnapGroup $gap={7}>
          {snaps.map((s) => (
            <CheckLabel key={s}>
              <CheckInput type="checkbox" defaultChecked={s === "End"} />
              {s}
            </CheckLabel>
          ))}
        </SnapGroup>
        <SnapGroup $gap={16}>
          {["Project", "Disable"].map((s) => (
            <CheckLabel key={s}>
              <CheckInput type="checkbox" disabled />
              {s}
            </CheckLabel>
          ))}
        </SnapGroup>
      </SnapBar>

      <StatusBar>
        <StatusCell type="button" $w={32}>CPlane</StatusCell>
        <StatusCell type="button" $w={57} $center>x 0.34</StatusCell>
        <StatusCell type="button" $w={57} $center>y 0.86</StatusCell>
        <StatusCell type="button" $w={57} $center>z 0.00</StatusCell>
        <StatusCell type="button" $w={57} $center>Feet</StatusCell>
        <StatusCell type="button" $w={106} $grow>
          <Swatch />
          sun
        </StatusCell>
        {toggles.map(([name, w, on]) => (
          <StatusCell type="button" key={name} $w={w} $on={on}>{name}</StatusCell>
        ))}
        <StatusCell as="span" $w={16} />
      </StatusBar>
      <BottomEdge />
    </Window>
  );
};

export default App;
